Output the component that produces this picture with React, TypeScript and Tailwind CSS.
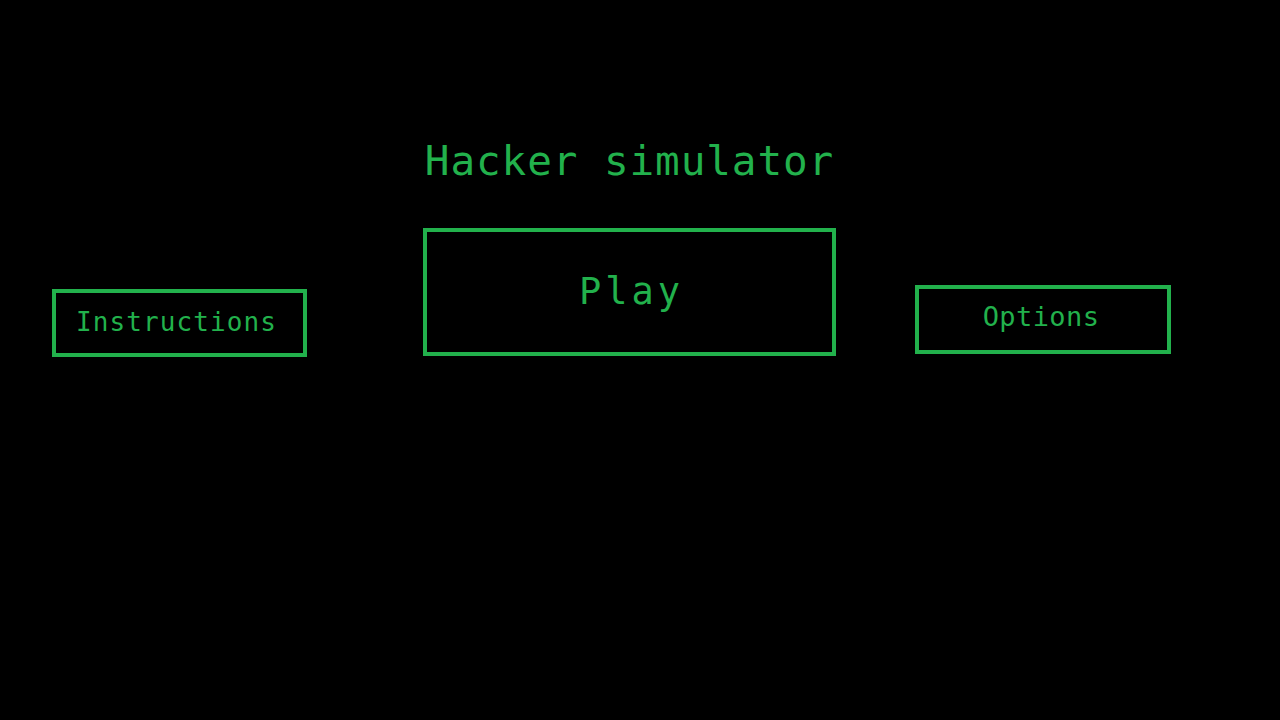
const MONO = "font-['DejaVu_Sans_Mono','Liberation_Mono',monospace]";

function MenuButton({ label, className }: { label: string; className: string }) {
  return (
    <button
      className={`flex shrink-0 items-center justify-center border-4 border-[#22b14c] bg-black text-[#22b14c] ${MONO} ${className}`}
    >
      {label}
    </button>
  );
}

export default function App() {
  return (
    <div className="h-[720px] w-[1280px] overflow-hidden bg-black">
      <div className="flex items-start pl-[52px] pt-[141px]">
        <MenuButton
          label="Instructions"
          className="mt-[148px] h-[68px] w-[255px] pb-[2px] pr-[6px] text-[26px] tracking-[1.1px]"
        />
        <div className="ml-[116px] flex w-[413px] flex-col items-center">
          <h1 className={`${MONO} text-[41px] leading-none tracking-[0.9px] text-[#22b14c] font-normal`}>
            Hacker simulator
          </h1>
          <MenuButton
            label="Play"
            className="mt-[46px] h-[128px] w-[413px] pl-[4px] text-[37px] tracking-[4px]"
          />
        </div>
        <MenuButton
          label="Options"
          className="ml-[79px] mt-[144px] h-[69px] w-[256px] pb-[4px] pr-[4px] text-[27px] tracking-[0.4px]"
        />
      </div>
    </div>
  );
}
